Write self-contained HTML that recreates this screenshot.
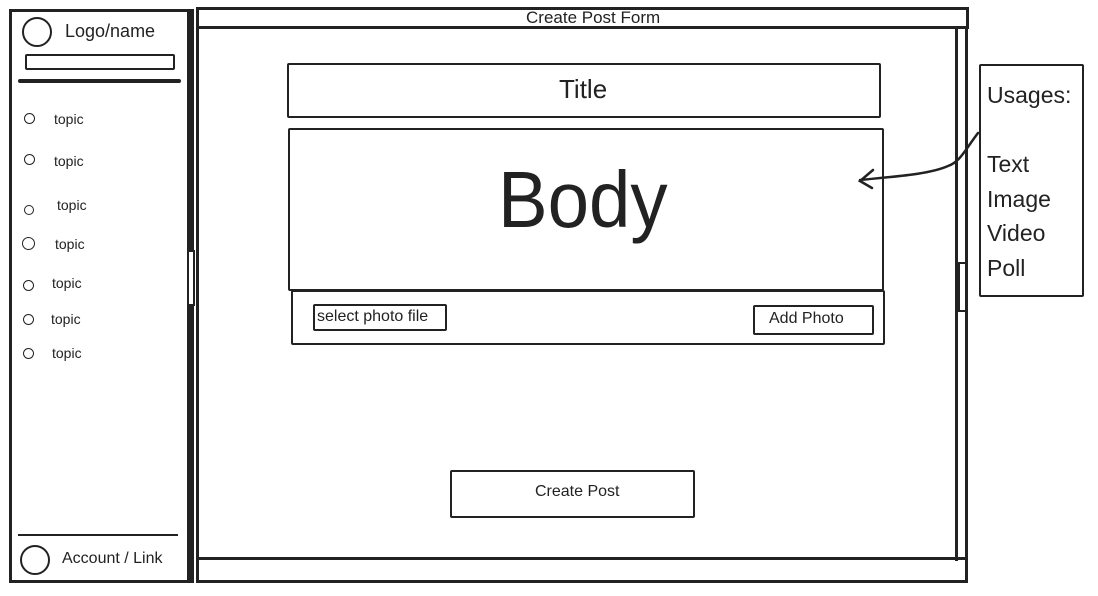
<!DOCTYPE html>
<html><head><style>
body{margin:0;width:1098px;height:596px;background:#fff;position:relative;overflow:hidden;font-family:"Liberation Sans",sans-serif;color:#222}
.a{position:absolute;box-sizing:border-box}
.b{border:2px solid #222;border-radius:2px}
.t{position:absolute;white-space:nowrap;line-height:1}
.c{position:absolute;border:1.5px solid #222;border-radius:50%;box-sizing:border-box}
</style></head><body>
<!-- sidebar -->
<div class="a" style="left:9px;top:9px;width:181px;height:574px;border:3px solid #222;border-right-width:3px"></div>
<div class="a" style="left:190px;top:9px;width:4px;height:574px;background:#222"></div>
<div class="a" style="left:187px;top:250px;width:8px;height:56px;border:2px solid #222;background:#fff"></div>
<div class="c" style="left:22px;top:17px;width:30px;height:30px;border-width:2.5px"></div>
<div class="t" style="left:65px;top:22px;font-size:18px">Logo/name</div>
<div class="a b" style="left:25px;top:54px;width:150px;height:16px"></div>
<div class="a" style="left:18px;top:79px;width:163px;height:4px;background:#222;border-radius:2px"></div>
<div class="c" style="left:24px;top:113px;width:11px;height:11px"></div><div class="t" style="left:54px;top:112px;font-size:14px">topic</div>
<div class="c" style="left:24px;top:154px;width:11px;height:11px"></div><div class="t" style="left:54px;top:154px;font-size:14px">topic</div>
<div class="c" style="left:24px;top:205px;width:10px;height:10px"></div><div class="t" style="left:57px;top:198px;font-size:14px">topic</div>
<div class="c" style="left:22px;top:237px;width:13px;height:13px"></div><div class="t" style="left:55px;top:237px;font-size:14px">topic</div>
<div class="c" style="left:23px;top:280px;width:11px;height:11px"></div><div class="t" style="left:52px;top:276px;font-size:14px">topic</div>
<div class="c" style="left:23px;top:314px;width:11px;height:11px"></div><div class="t" style="left:51px;top:312px;font-size:14px">topic</div>
<div class="c" style="left:23px;top:348px;width:11px;height:11px"></div><div class="t" style="left:52px;top:346px;font-size:14px">topic</div>
<div class="a" style="left:18px;top:534px;width:160px;height:2px;background:#222"></div>
<div class="c" style="left:20px;top:545px;width:30px;height:30px;border-width:2.5px"></div>
<div class="t" style="left:62px;top:551px;font-size:16px">Account / Link</div>
<!-- main -->
<div class="a" style="left:196px;top:7px;width:773px;height:22px;border:3px solid #222"></div>
<div class="t" style="left:526px;top:9px;font-size:17px">Create Post Form</div>
<div class="a" style="left:196px;top:27px;width:3px;height:556px;background:#222"></div>
<div class="a" style="left:955px;top:27px;width:3px;height:534px;background:#222"></div>
<div class="a" style="left:965px;top:27px;width:3px;height:556px;background:#222"></div>
<div class="a" style="left:958px;top:262px;width:9px;height:50px;border:2px solid #222;background:#fff"></div>
<div class="a" style="left:196px;top:557px;width:772px;height:3px;background:#222"></div>
<div class="a" style="left:196px;top:580px;width:772px;height:3px;background:#222"></div>
<!-- form -->
<div class="a b" style="left:287px;top:63px;width:594px;height:55px;border-width:2.5px"></div>
<div class="t" style="left:559px;top:76px;font-size:26px">Title</div>
<div class="a b" style="left:288px;top:128px;width:596px;height:163px;border-width:2.5px"></div>
<div class="t" style="left:498px;top:160px;font-size:80px;transform:scaleX(0.93);transform-origin:0 0">Body</div>
<div class="a b" style="left:291px;top:290px;width:594px;height:55px;border-width:2.5px"></div>
<div class="a b" style="left:313px;top:304px;width:134px;height:27px;border-width:2.5px"></div>
<div class="t" style="left:317px;top:309px;font-size:16px">select photo file</div>
<div class="a b" style="left:753px;top:305px;width:121px;height:30px;border-width:2.5px"></div>
<div class="t" style="left:769px;top:311px;font-size:16px">Add Photo</div>
<div class="a b" style="left:450px;top:470px;width:245px;height:48px"></div>
<div class="t" style="left:535px;top:484px;font-size:16px">Create Post</div>
<!-- usages -->
<div class="a b" style="left:979px;top:64px;width:105px;height:233px"></div>
<div class="t" style="left:987px;top:78px;font-size:23px;line-height:34.5px">Usages:<br><br>Text<br>Image<br>Video<br>Poll</div>
<svg class="a" style="left:0;top:0" width="1098" height="596"><path d="M978 133 C965 150 960 162 948 166 C930 174 900 176 860 180 M873 170 L860 181 L872 188" fill="none" stroke="#222" stroke-width="2.5" stroke-linecap="round"/></svg>
</body></html>
